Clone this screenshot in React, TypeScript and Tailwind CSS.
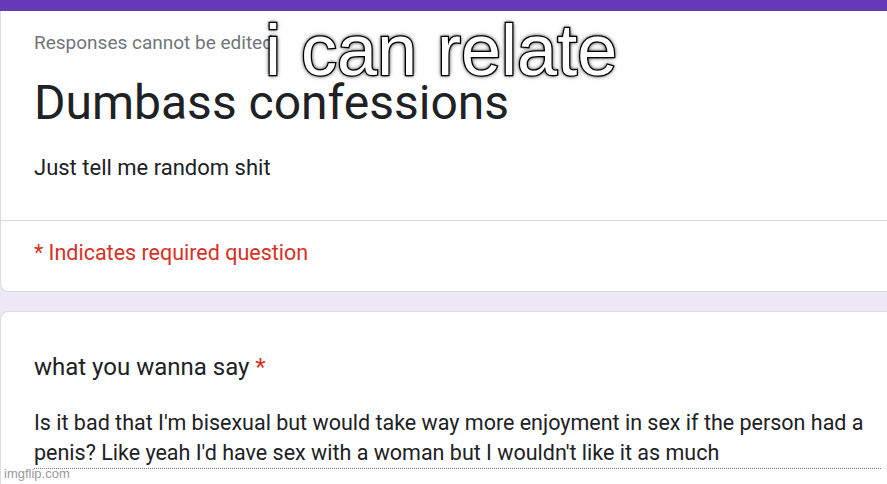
export default function App() {
  return (
    <div className="relative h-[484px] w-[887px] overflow-hidden bg-[#ede9f7]" style={{ fontFamily: 'Roboto, "Liberation Sans", sans-serif' }}>
      <div className="h-[11px] bg-[#673ab7]" />
      <div className="-mr-4 rounded-bl-lg border-b border-l border-[#dadce0] bg-white">
        <div className="px-[33px] pt-[20px] pb-[38px]">
          <p className="text-[19px] leading-[24px] text-[#70757a]">Responses cannot be edited</p>
          <h1 className="mt-[20px] text-[48px] leading-[56px] text-[#202124]">Dumbass confessions</h1>
          <p className="mt-[23px] text-[22px] leading-[28px] text-[#202124]">Just tell me random shit</p>
        </div>
        <div className="border-t border-[#dadce0] px-[33px] pt-[18px] pb-[24px]">
          <p className="text-[21.5px] leading-[28px] text-[#d93025]">* Indicates required question</p>
        </div>
      </div>
      <div className="mt-[19px] -mr-4 rounded-tl-lg border-t border-l border-[#dadce0] bg-white px-[33px] pt-[39px] pb-10">
        <p className="text-[24px] leading-[32px] text-[#202124]">
          what you wanna say <span className="text-[#d93025]">*</span>
        </p>
        <div className="mt-[25px] w-[847px] text-[21.5px] leading-[30px] text-[#202124]">
          Is it bad that I'm bisexual but would take way more enjoyment in sex if the person had a penis? Like yeah I'd have sex with a woman but I wouldn't like it as much
        </div>
        <div className="w-[847px] border-t border-dotted border-[#7a7a7a]" />
      </div>
      <div
        className="absolute left-[265px] top-[10px] text-[72px] leading-[80px] text-white"
        style={{ fontFamily: '"Liberation Sans", Arial, sans-serif', WebkitTextStroke: '2.5px black', paintOrder: 'stroke fill', textShadow: '0 0 3px #000, 0 0 5px #000' }}
      >
        i can relate
      </div>
      <div className="absolute bottom-[3px] left-[4px] text-[13px] leading-[14px] text-[#9a9a9a]" style={{ fontFamily: '"Liberation Sans", Arial, sans-serif' }}>
        imgflip.com
      </div>
    </div>
  );
}
